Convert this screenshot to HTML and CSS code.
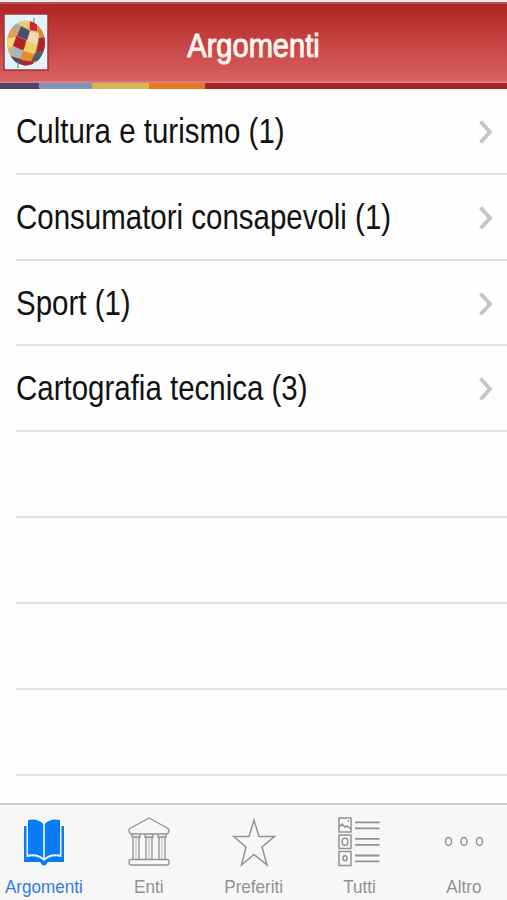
FILE: index.html
```
<!DOCTYPE html>
<html lang="it">
<head>
<meta charset="utf-8">
<title>Argomenti</title>
<link rel="stylesheet" href="styles.css">
</head>
<body>
<div class="app">
  <header class="header">
    <svg class="logo" viewBox="0 0 46 58">
      <rect x="1" y="1" width="44" height="56" fill="#e2f4fb" stroke="#a4303a" stroke-width="1.5"/>
      <defs><clipPath id="ball"><ellipse cx="23" cy="30" rx="19" ry="22.5"/></clipPath></defs>
      <g clip-path="url(#ball)">
        <rect width="46" height="58" fill="#dfae67"/>
        <path d="M13 6L28 4L25 15L16 12Z" fill="#e7cc83"/>
        <path d="M4 16L12 10L17 14L13 24L3 26Z" fill="#e3a14d"/>
        <path d="M12 11L17 12L15 17L11 17Z" fill="#8faec5"/>
        <path d="M18 13L27 18L24 27L14 23Z" fill="#46506f"/>
        <path d="M27 8L34 10L34 18L27 17Z" fill="#c92335"/>
        <path d="M34 12L44 22L40 30L34 18Z" fill="#d5902f"/>
        <path d="M27 18L36 20L34 32L24 29Z" fill="#f3d8b2"/>
        <path d="M13 23L23 27L21 38L10 33Z" fill="#b91f28"/>
        <path d="M3 26L13 24L9 34L4 35Z" fill="#f0d977"/>
        <path d="M24 29L34 32L31 42L20 38Z" fill="#efcf63"/>
        <path d="M36 25L44 24L43 37L33 40Z" fill="#ad252c"/>
        <path d="M10 33L21 38L18 45L7 41Z" fill="#a5b6bd"/>
        <path d="M20 38L31 41L28 51L17 47Z" fill="#e58c28"/>
        <path d="M32 40L42 37L36 48L28 49Z" fill="#575769"/>
        <path d="M7 43L18 46L24 54L13 53Z" fill="#59465b"/>
        <path d="M18 47L31 49L28 54L21 54Z" fill="#a72737"/>
      </g>
      <path d="M31 5V10M15 48V55" stroke="#657b87" fill="none"/>
    </svg>
    <h1 class="title">Argomenti</h1>
  </header>
  <div class="stripes"><i class="s1"></i><i class="s2"></i><i class="s3"></i><i class="s4"></i><i class="s5"></i></div>
  <main class="list">
    <div class="row"><span class="label">Cultura e turismo (1)</span><svg class="chev" viewBox="0 0 16 26"><path d="M2.500 2.500L12 13L2.500 23.500"/></svg></div>
    <div class="row"><span class="label">Consumatori consapevoli (1)</span><svg class="chev" viewBox="0 0 16 26"><path d="M2.500 2.500L12 13L2.500 23.500"/></svg></div>
    <div class="row"><span class="label">Sport (1)</span><svg class="chev" viewBox="0 0 16 26"><path d="M2.500 2.500L12 13L2.500 23.500"/></svg></div>
    <div class="row"><span class="label">Cartografia tecnica (3)</span><svg class="chev" viewBox="0 0 16 26"><path d="M2.500 2.500L12 13L2.500 23.500"/></svg></div>
    <div class="row"></div>
    <div class="row"></div>
    <div class="row"></div>
    <div class="row"></div>
  </main>
  <nav class="tabs">
    <div class="tab active">
      <svg class="icon" viewBox="0 0 44 52">
        <path d="M2 10H4.500V41C12 39 18 41 22 45C26 41 32 39 39.500 41V10H42V46H26Q24 49.500 22 49.500Q20 49.500 18 46H2Z" fill="#087cf8"/>
        <path d="M6 4Q16 2 21.200 8V42Q16 37 6 38.500ZM38 4Q28 2 22.800 8V42Q28 37 38 38.500Z" fill="#087cf8"/>
      </svg>
      <span class="name">Argomenti</span>
    </div>
    <div class="tab">
      <svg class="icon" viewBox="0 0 44 52" fill="none" stroke="#929292" stroke-width="1.300">
        <path d="M22 2L3 12.500Q1 14 2.500 16.500L4 18H40L41.500 16.500Q43 14 41 12.500Z"/>
        <path d="M5 18V21H13V18M18 18V21H26V18M31 18V21H39V18"/>
        <path d="M6 21V43.500M12 21V43.500M19 21V43.500M25 21V43.500M32 21V43.500M38 21V43.500"/>
        <path d="M9 21V43.500M22 21V43.500M35 21V43.500" stroke-width="1" opacity=".6"/>
        <rect x="2" y="43.500" width="40" height="5.500" rx="2"/>
      </svg>
      <span class="name">Enti</span>
    </div>
    <div class="tab">
      <svg class="icon" viewBox="0 0 44 52" fill="none" stroke="#929292" stroke-width="1.500">
        <path d="M22 4L27 20.500H42.500L30 31L35 49L22 38.500L9.500 49L14 31L1.800 20.500H17Z"/>
      </svg>
      <span class="name">Preferiti</span>
    </div>
    <div class="tab">
      <svg class="icon" viewBox="0 0 44 52" fill="none" stroke="#929292" stroke-width="1.500">
        <rect x="2" y="2" width="12" height="14"/><rect x="2" y="19" width="12" height="13.500"/><rect x="2" y="35.500" width="12" height="14"/>
        <path d="M2 11L5 8L8 11L10 10L14 13M10.500 5H12"/>
        <ellipse cx="8" cy="25.700" rx="2.900" ry="3.500"/><ellipse cx="8" cy="42.300" rx="2" ry="2.500"/>
        <path d="M18 6.300H42.500M18 12.300H42.500M18 22.800H42.500M18 28.800H42.500M18 39.500H42.500M18 45.300H42.500" stroke-width="1.800"/>
      </svg>
      <span class="name">Tutti</span>
    </div>
    <div class="tab">
      <svg class="icon" viewBox="0 0 44 52" fill="none" stroke="#929292" stroke-width="1.500">
        <ellipse cx="6.500" cy="25.500" rx="3" ry="3.900"/><ellipse cx="22" cy="25.500" rx="3" ry="3.900"/><ellipse cx="37.500" cy="25.500" rx="3" ry="3.900"/>
      </svg>
      <span class="name">Altro</span>
    </div>
  </nav>
</div>
</body>
</html>
```
FILE: styles.css
```
* { box-sizing: border-box; }
body {
  margin: 0;
  background: #fefefe;
  font-family: "Liberation Sans", Arial, sans-serif;
}
.app {
  width: 507px;
  height: 900px;
  display: flex;
  flex-direction: column;
  overflow: hidden;
  border-top: 2px solid #f6e9ec;
}
.header {
  flex: none;
  height: 81px;
  display: grid;
  grid-template-columns: 50px 1fr 50px;
  align-items: center;
  border-top: 2px solid #b0565a;
  border-bottom: 2px solid #dd7b7c;
  background: linear-gradient(#b02523, #da6162);
}
.logo {
  width: 46px;
  height: 58px;
  margin: -2px 0 0 3px;
}
.title {
  margin: 7px 0 0;
  color: #fff3ee;
  font-size: 33px;
  font-weight: normal;
  line-height: 40px;
  text-align: center;
  -webkit-text-stroke: 1px #fff3ee;
  transform: scaleX(.88);
}
.stripes {
  flex: none;
  height: 6px;
  display: flex;
}
.s1 { width: 39px; background: #50466b; }
.s2 { width: 53px; background: #7c95b9; }
.s3 { width: 57px; background: #d3b94f; }
.s4 { width: 56px; background: #e17a20; }
.s5 { flex: 1; background: #a92026; }
.list {
  flex: 1;
  min-height: 0;
  overflow: hidden;
  padding-left: 16px;
}
.row {
  height: 85.830px;
  display: flex;
  align-items: center;
  justify-content: space-between;
  padding-right: 13px;
  border-bottom: 2px solid #e2e2e2;
}
.label {
  color: #111;
  font-size: 35px;
  line-height: 40px;
  white-space: nowrap;
  transform: scaleX(.842);
  transform-origin: left;
}
.chev {
  width: 16px;
  height: 26px;
  margin-top: 2px;
  fill: none;
  stroke: #c5c5c8;
  stroke-width: 3.900px;
}
.tabs {
  flex: none;
  height: 97px;
  display: flex;
  border-top: 2px solid #cbcbcb;
  background: #f7f7f7;
  color: #929292;
}
.tab {
  flex: none;
  width: 105.200px;
  display: flex;
  flex-direction: column;
  align-items: center;
  padding-top: 11px;
}
.tab:first-child { margin-left: -9px; }
.active { color: #2c80dd; }
.icon {
  flex: none;
  width: 44px;
  height: 52px;
}
.name {
  margin-top: 8px;
  font-size: 18.400px;
  line-height: 22px;
  transform: scaleX(.93);
}
```
